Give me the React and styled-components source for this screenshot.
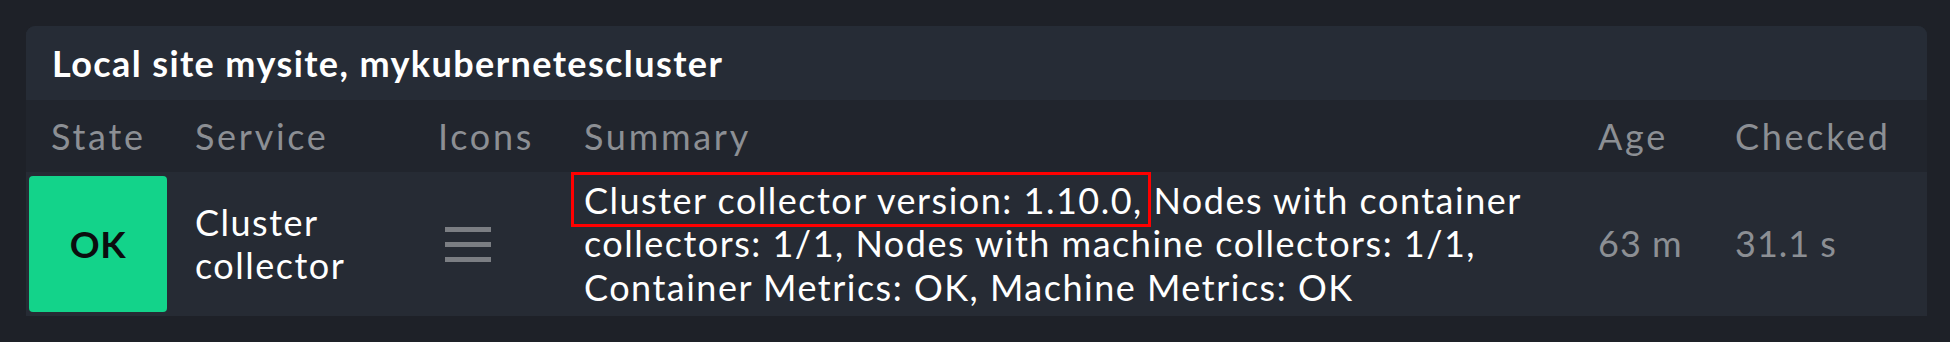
import React from "react";
import styled, { createGlobalStyle } from "styled-components";

const Global = createGlobalStyle`
  html, body {
    margin: 0;
    padding: 0;
    background: #1e2128;
  }
  body {
    font-family: Lato, "Noto Sans", sans-serif;
  }
`;

const Page = styled.div`
  padding: 26px 23px 26px 26px;
`;

const Card = styled.section`
  border-radius: 9px 9px 0 0;
  overflow: hidden;
  background: #262b34;
`;

const Title = styled.h2`
  margin: 0;
  height: 74px;
  display: flex;
  align-items: center;
  padding-left: 26px;
  background: #262c36;
  color: #ffffff;
  font-size: 36px;
  font-weight: 700;
  letter-spacing: 1.4px;
`;

const Table = styled.div`
  display: grid;
  grid-template-columns: 144px 243px 146px 1014px 137px 1fr;
`;

const HeadCell = styled.div`
  height: 72px;
  display: flex;
  align-items: center;
  padding-left: 25px;
  background: #21252d;
  color: #8c8f94;
  font-size: 36px;
  letter-spacing: 2.7px;
`;

const Cell = styled.div`
  min-height: 144px;
  display: flex;
  align-items: center;
  padding: ${(p) => (p.$badge ? "4px 3px 4px 3px" : "0 25px")};
  color: ${(p) => (p.$muted ? "#8c8f94" : "#ffffff")};
  font-size: 36px;
  line-height: 43.5px;
  letter-spacing: ${(p) => (p.$muted ? "1px" : "1.5px")};
  box-sizing: border-box;
`;

const Badge = styled.div`
  flex: 1;
  align-self: stretch;
  display: flex;
  align-items: center;
  justify-content: center;
  background: #13d38a;
  border-radius: 4px;
  color: #0b0d0e;
  font-size: 37px;
  font-weight: 700;
  letter-spacing: 0.5px;
`;

const Menu = styled.div`
  width: 46px;
  display: flex;
  flex-direction: column;
  gap: 10px;
  margin-left: 7px;
`;

const Bar = styled.span`
  display: block;
  height: 5px;
  background: #7b7e83;
`;

const Highlight = styled.span`
  position: relative;
  &::after {
    content: "";
    position: absolute;
    left: -13px;
    right: -8px;
    top: -6px;
    bottom: -5px;
    border: 3px solid #ff0000;
    pointer-events: none;
  }
`;

const heads = ["State", "Service", "Icons", "Summary", "Age", "Checked"];

export default function App() {
  return (
    <>
      <Global />
      <Page>
        <Card>
          <Title>Local site mysite, mykubernetescluster</Title>
          <Table>
            {heads.map((h) => (
              <HeadCell key={h}>{h}</HeadCell>
            ))}
            <Cell $badge>
              <Badge>OK</Badge>
            </Cell>
            <Cell>Cluster collector</Cell>
            <Cell>
              <Menu>
                <Bar />
                <Bar />
                <Bar />
              </Menu>
            </Cell>
            <Cell>
              <div>
                <Highlight>Cluster collector version: 1.10.0,</Highlight> Nodes with container
                collectors: 1/1, Nodes with machine collectors: 1/1, Container Metrics: OK,
                Machine Metrics: OK
              </div>
            </Cell>
            <Cell $muted>63 m</Cell>
            <Cell $muted>31.1 s</Cell>
          </Table>
        </Card>
      </Page>
    </>
  );
}
